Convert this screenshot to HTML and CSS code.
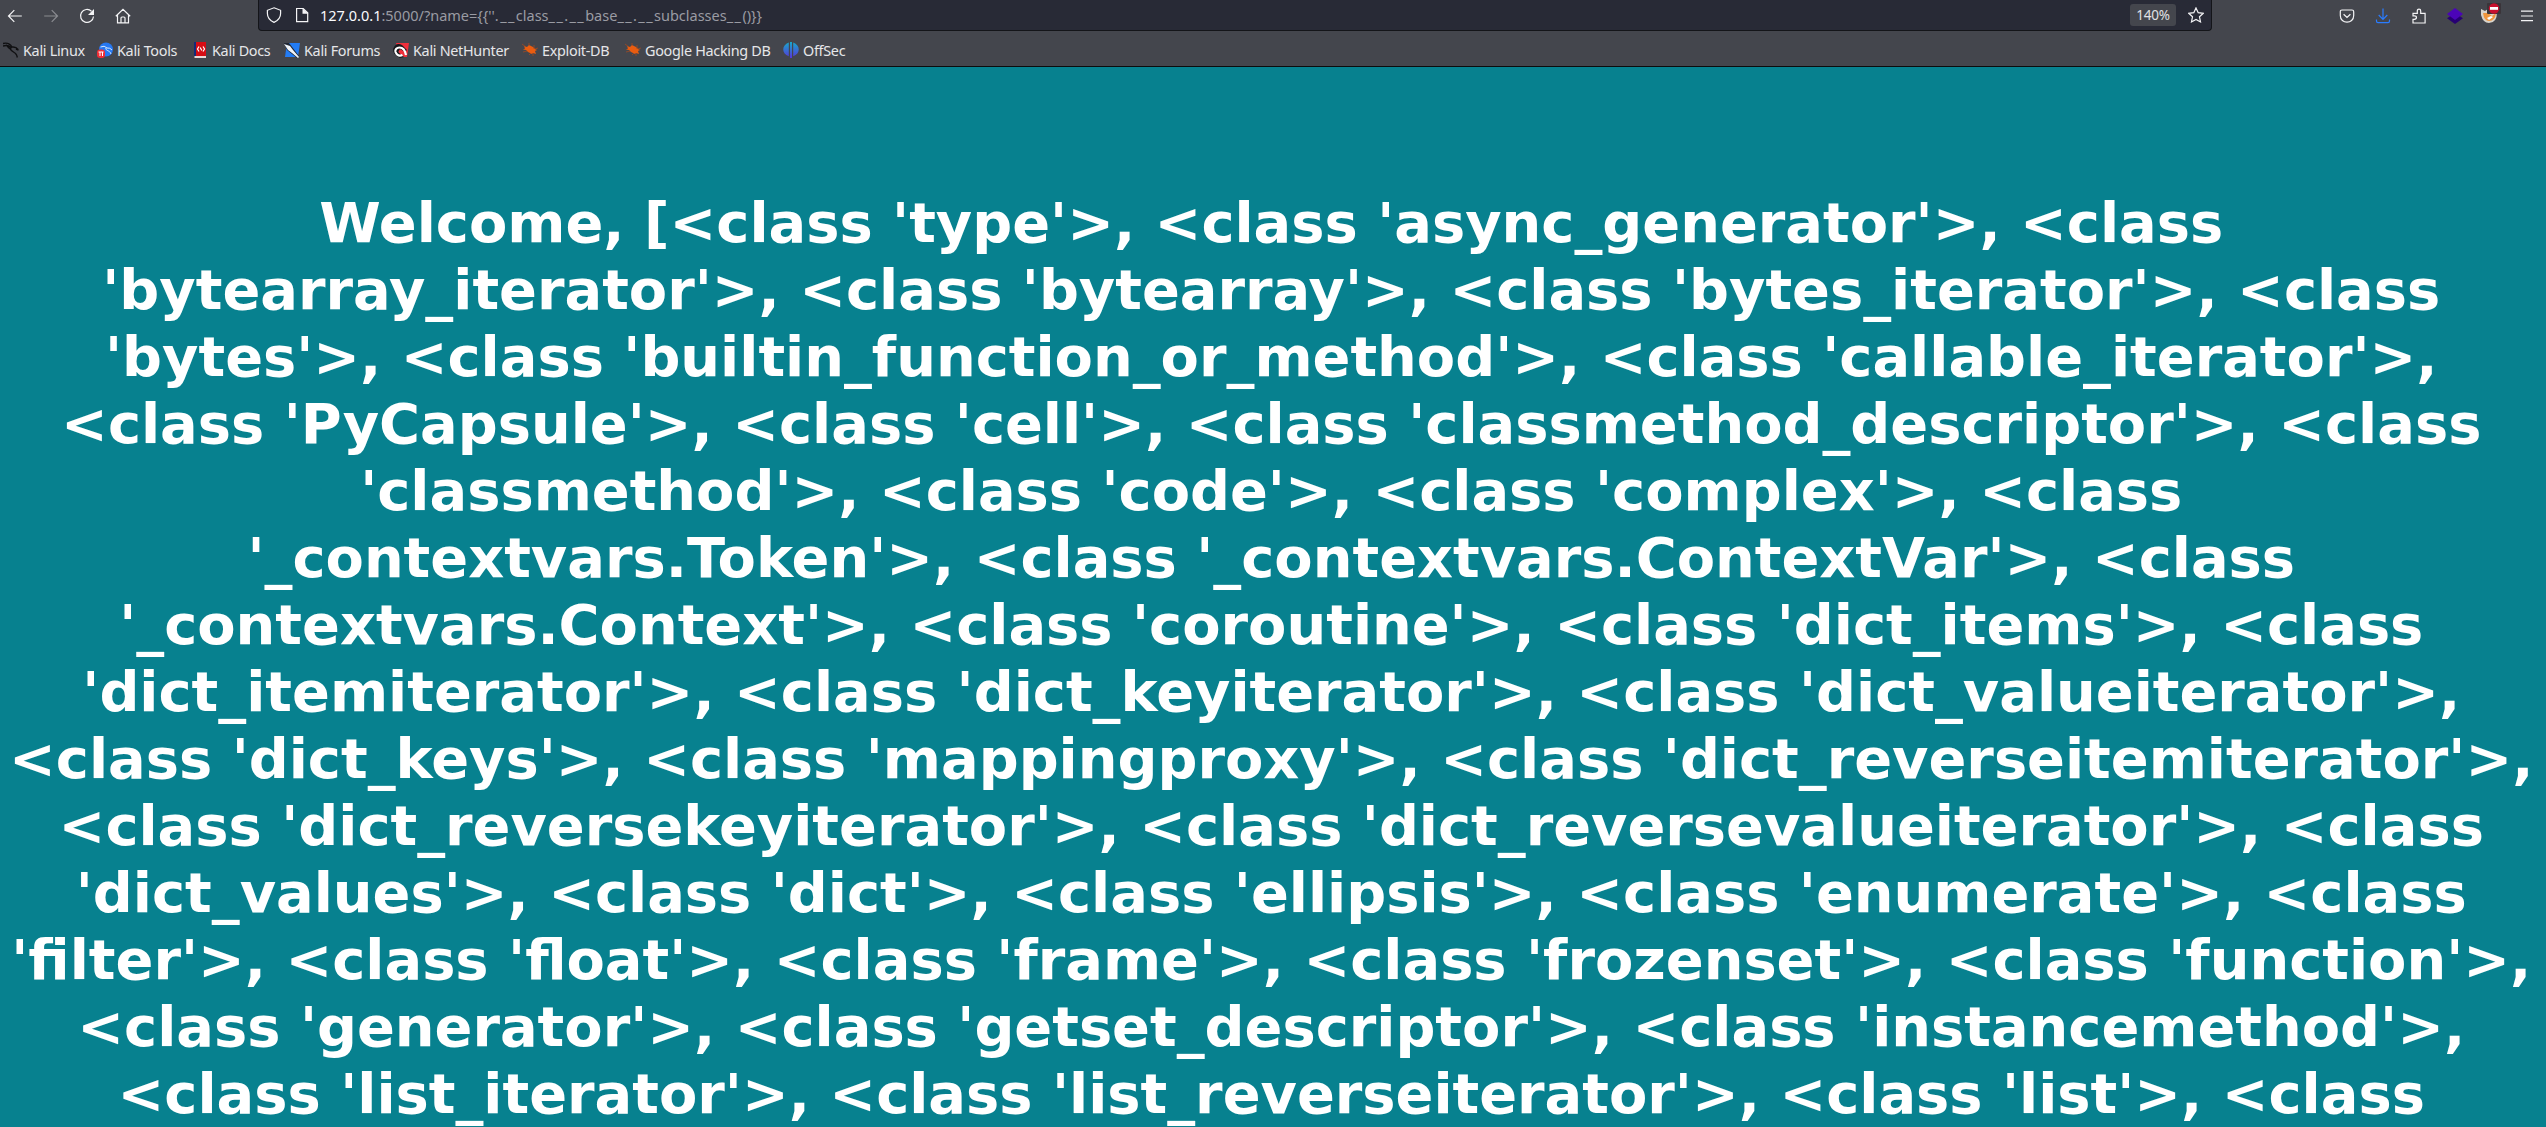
FILE: index.html
```
<!DOCTYPE html>
<html lang="en">
<head>
<meta charset="utf-8">
<title>Welcome</title>
<link rel="stylesheet" href="styles.css">
</head>
<body>
<header class="chrome">
  <div class="toolbar">
    <nav class="nav">
      <svg class="ic" viewBox="0 0 16 16"><path d="M14.800 8H1.500M7.300 2.200L1.500 8l5.800 5.800"/></svg>
      <svg class="ic dim" viewBox="0 0 16 16"><path d="M1.200 8h13.300M8.700 2.200L14.500 8l-5.800 5.800"/></svg>
      <svg class="ic" viewBox="0 0 16 16"><path d="M12.500 3.200A6.500 6.500 0 1 0 14.500 8.500"/><path class="fill" d="M15 1v6H9z"/></svg>
      <svg class="ic" viewBox="0 0 16 16"><path d="M.8 8.300L8 1.300l7.200 7M2.500 7.200v7.700h11V7.200M6 14.500V10q0-1 1-1h2q1 0 1 1v4.500"/></svg>
    </nav>
    <div class="urlbar">
      <svg class="ic" viewBox="0 0 16 16"><path d="M8 .8l6.600 2.500v3.200c0 4.200-2.400 7-6.600 8.900-4.200-1.900-6.600-4.700-6.600-8.900V3.300z"/></svg>
      <svg class="ic doc" viewBox="0 0 16 16"><path d="M2.600 1.500h6.600l4.500 4.300v8.900H2.600z"/><path class="fill" d="M8.500 1v5.800h5.800z"/></svg>
      <span class="url"><b>127.0.0.1</b>:5000/?name={{''<i>.__</i>class<i>__.__</i>base<i>__.__</i>subclasses<i>__</i>()}}</span>
      <span class="zoom">140%</span>
      <svg class="ic" viewBox="0 0 16 16"><path d="M8 .9l2.200 4.800 5.100.6-3.800 3.500 1 5.100L8 12.400l-4.500 2.500 1-5.100L.7 6.300l5.100-.6z"/></svg>
    </div>
    <div class="tools">
      <svg class="ic" viewBox="0 0 16 16"><path d="M3 2h10q1.700 0 1.700 1.700v3.800c0 8.900-13.400 8.900-13.400 0V3.700Q1.300 2 3 2zM4.600 6.200L8 9.400l3.400-3.200"/></svg>
      <svg class="ic blue" viewBox="0 0 16 16"><path d="M8 .5v10.800M3.700 7L8 11.300 12.300 7M1.500 11.500V13q0 1.700 1.500 1.700h10q1.500 0 1.500-1.700v-1.500"/></svg>
      <svg class="ic" viewBox="0 0 16 16"><path d="M2 15v-3.700h1.300c2.900 0 2.900-3.500 0-3.500H2V5.300h4.300V2.900c0-2.500 3.400-2.500 3.400 0v2.400h4.400V15z"/></svg>
      <svg class="ic flat" viewBox="0 0 16 16"><path fill="#270073" d="M0 10.300L8 5l8 5.300L8 16z"/><path fill="#4b04b8" d="M0 6l8-6 8 6-8 6z"/></svg>
      <svg class="ic flat fox" viewBox="0 0 20 20"><path fill="#d8d3ca" d="M0 6l4 2q2-2 6-3l6 4q0 11-8 11-6 0-8-8z"/><path fill="#f0953c" d="M2 10q1 8 6 8 6 0 7-8l-4 3-4-3z"/><path fill="#fff" d="M6 15l4-2 2 1-4 3z"/><rect x="6" width="14" height="11" rx="1" fill="#3a3439"/><circle cx="13" cy="5.500" r="5.200" fill="#c8102e"/><path fill="#fff" d="M9 4h8v2.800H9z"/></svg>
      <svg class="ic" viewBox="0 0 16 16"><path d="M2 3.200h12M2 8h12M2 12.700h12"/></svg>
    </div>
  </div>
  <nav class="bookmarks">
    <a><svg viewBox="0 0 16 16"><path d="M0 1.500q6-1.500 9 3.500 4-.5 6 2.500M0 4q5-1.500 8 1.500M8.500 5c-3 3 2 4.500 4 6.500 1.500 1.500 1.500 2.500 1.800 4M3 3l4 4M13 7l2.500 1.200" fill="none" stroke="#101012" stroke-width="1.400"/></svg>Kali Linux</a>
    <a><svg viewBox="0 0 16 16"><circle cx="9" cy="7.500" r="7" fill="#2678f2"/><path d="M3.500 5q4-2 6.500 1 3-.5 5 2M9 6c-1 3 4 2 5 6" fill="none" stroke="#d8e9ff"/><rect y="7.500" width="8" height="8.500" rx="3" fill="#ef2d35"/><path d="M1.500 10h5M3 10v4M5.500 10v4" stroke="#fff" fill="none"/></svg>Kali Tools</a>
    <a><svg viewBox="0 0 16 16"><path fill="#142b79" d="M2 0h4v14H2z"/><path fill="#d50c14" d="M4 0h10v14H4z"/><path fill="#e8d8d8" d="M2.500 14H14v2H2.500z"/><path d="M7 4.500L5.500 7 7 9.500M11 4.500L12.500 7 11 9.500M8.200 5.500l1.600 3" fill="none" stroke="#fff" stroke-width="1.200"/></svg>Kali Docs</a>
    <a><svg viewBox="0 0 16 16"><path fill="#237cf5" d="M3 1h13l-2 14H1z"/><path fill="#202632" d="M0 1h5l10 13-2 2L3 8z"/><path fill="#eef3fa" d="M0 2l6 2 3 4 6 7-1 1-6-5-4-3z"/></svg>Kali Forums</a>
    <a><svg viewBox="0 0 16 16"><path fill="#f02f3b" d="M3 1h13l-2 14H7z"/><path fill="#17181c" d="M0 7q3-7 9-4l5 5-2 2-5-3-2 3 6 5-4 1Q0 13 0 7z"/><path d="M13 13C11 2 1 5 2.500 10c1 3 4 4.500 7 3" fill="none" stroke="#fff" stroke-width="2.200"/></svg>Kali NetHunter</a>
    <a><svg viewBox="0 0 16 16"><path id="bug" d="M2 4l3 1 2-2 4 2 2 2 2 1-2 1 1 3-3-1-1 1-4-2-2-2-3-.5 2-1z" fill="#e95c10"/><path d="M0 2l4 3M7 1v3M12 3v4M1 10l4-1M7 13l2-2M11 14v-3M13 7l3-1" stroke="#ad4b1b" stroke-width=".7"/></svg>Exploit-DB</a>
    <a><svg viewBox="0 0 16 16"><use href="#bug"/><path d="M0 2l4 3M7 1v3M12 3v4M1 10l4-1M7 13l2-2M11 14v-3M13 7l3-1" stroke="#ad4b1b" stroke-width=".7"/></svg>Google Hacking DB</a>
    <a><svg viewBox="0 0 16 16"><defs><linearGradient id="os" x2="0" y2="1"><stop stop-color="#18a9c9"/><stop offset="1" stop-color="#5635d9"/></linearGradient></defs><path fill="url(#os)" d="M5.800.6v13.700C-1.600 11.500-1.600 3.400 5.800.6zM7 0h2v16H7zM10.200.6v13.700c7.400-2.800 7.400-10.900 0-13.700z"/></svg>OffSec</a>
  </nav>
</header>
<main class="page">
<h1 class="welcome">Welcome, [&lt;class 'type'&gt;, &lt;class 'async_generator'&gt;, &lt;class<br>
'bytearray_iterator'&gt;, &lt;class 'bytearray'&gt;, &lt;class 'bytes_iterator'&gt;, &lt;class<br>
'bytes'&gt;, &lt;class 'builtin_function_or_method'&gt;, &lt;class 'callable_iterator'&gt;,<br>
&lt;class 'PyCapsule'&gt;, &lt;class 'cell'&gt;, &lt;class 'classmethod_descriptor'&gt;, &lt;class<br>
'classmethod'&gt;, &lt;class 'code'&gt;, &lt;class 'complex'&gt;, &lt;class<br>
'_contextvars.Token'&gt;, &lt;class '_contextvars.ContextVar'&gt;, &lt;class<br>
'_contextvars.Context'&gt;, &lt;class 'coroutine'&gt;, &lt;class 'dict_items'&gt;, &lt;class<br>
'dict_itemiterator'&gt;, &lt;class 'dict_keyiterator'&gt;, &lt;class 'dict_valueiterator'&gt;,<br>
&lt;class 'dict_keys'&gt;, &lt;class 'mappingproxy'&gt;, &lt;class 'dict_reverseitemiterator'&gt;,<br>
&lt;class 'dict_reversekeyiterator'&gt;, &lt;class 'dict_reversevalueiterator'&gt;, &lt;class<br>
'dict_values'&gt;, &lt;class 'dict'&gt;, &lt;class 'ellipsis'&gt;, &lt;class 'enumerate'&gt;, &lt;class<br>
'filter'&gt;, &lt;class 'float'&gt;, &lt;class 'frame'&gt;, &lt;class 'frozenset'&gt;, &lt;class 'function'&gt;,<br>
&lt;class 'generator'&gt;, &lt;class 'getset_descriptor'&gt;, &lt;class 'instancemethod'&gt;,<br>
&lt;class 'list_iterator'&gt;, &lt;class 'list_reverseiterator'&gt;, &lt;class 'list'&gt;, &lt;class</h1>
</main>
</body>
</html>
```
FILE: styles.css
```
body { margin: 0; background: #07818f; font-family: "Noto Sans", sans-serif; }
.chrome { height: 66px; background: #44464d; border-bottom: 1px solid #0c0c0d; color: #fbfbfe; font-size: 14.4px; }
.toolbar { display: flex; height: 31px; }
.nav { display: flex; align-items: center; gap: 20px; width: 258px; padding-left: 7px; box-sizing: border-box; }
.ic { width: 16px; height: 16px; flex: none; fill: none; stroke: #f4f4f6; stroke-width: 1.2; }
.ic .fill { fill: #f4f4f6; stroke: none; }
.dim { opacity: .4; }
.blue { stroke: #2a7cff; }
.flat { stroke: none; }
.fox { width: 20px; height: 20px; margin: -5px -2px 0; }
.urlbar { display: flex; align-items: center; width: 1954px; box-sizing: border-box; padding: 0 7px; background: #282a36; border: 1px solid #141519; border-top: 0; border-radius: 0 0 4px 4px; }
.doc { margin-left: 12px; }
.url { flex: 1; margin-left: 10px; color: #9a9ba3; font-size: 14.5px; white-space: nowrap; }
.url b { font-weight: 400; color: #fbfbfe; }
.url i { font-style: normal; letter-spacing: 1.4px; }
.zoom { width: 46px; height: 22px; margin-right: 12px; border-radius: 3px; background: #44464d; color: #e0e0e4; font-size: 13.5px; line-height: 22px; letter-spacing: -.2px; text-align: center; }
.tools { display: flex; align-items: center; gap: 20px; margin-left: 127px; }
.bookmarks { display: grid; grid-template-columns: 94px 95px 92px 109px 129px 103px 158px auto; align-items: center; height: 35px; padding: 3px 0 0 3px; box-sizing: border-box; color: #e6e6e9; }
.bookmarks a { display: flex; align-items: center; gap: 4px; letter-spacing: -.3px; white-space: nowrap; }
.bookmarks svg { width: 16px; height: 16px; flex: none; }
.page { height: 1060px; padding: 122px 3.500px 0 0; box-sizing: border-box; overflow: hidden; }
.welcome { margin: 0; color: #fff; font: bold 55.84px/67px "DejaVu Sans", sans-serif; text-align: center; white-space: nowrap; }
```
